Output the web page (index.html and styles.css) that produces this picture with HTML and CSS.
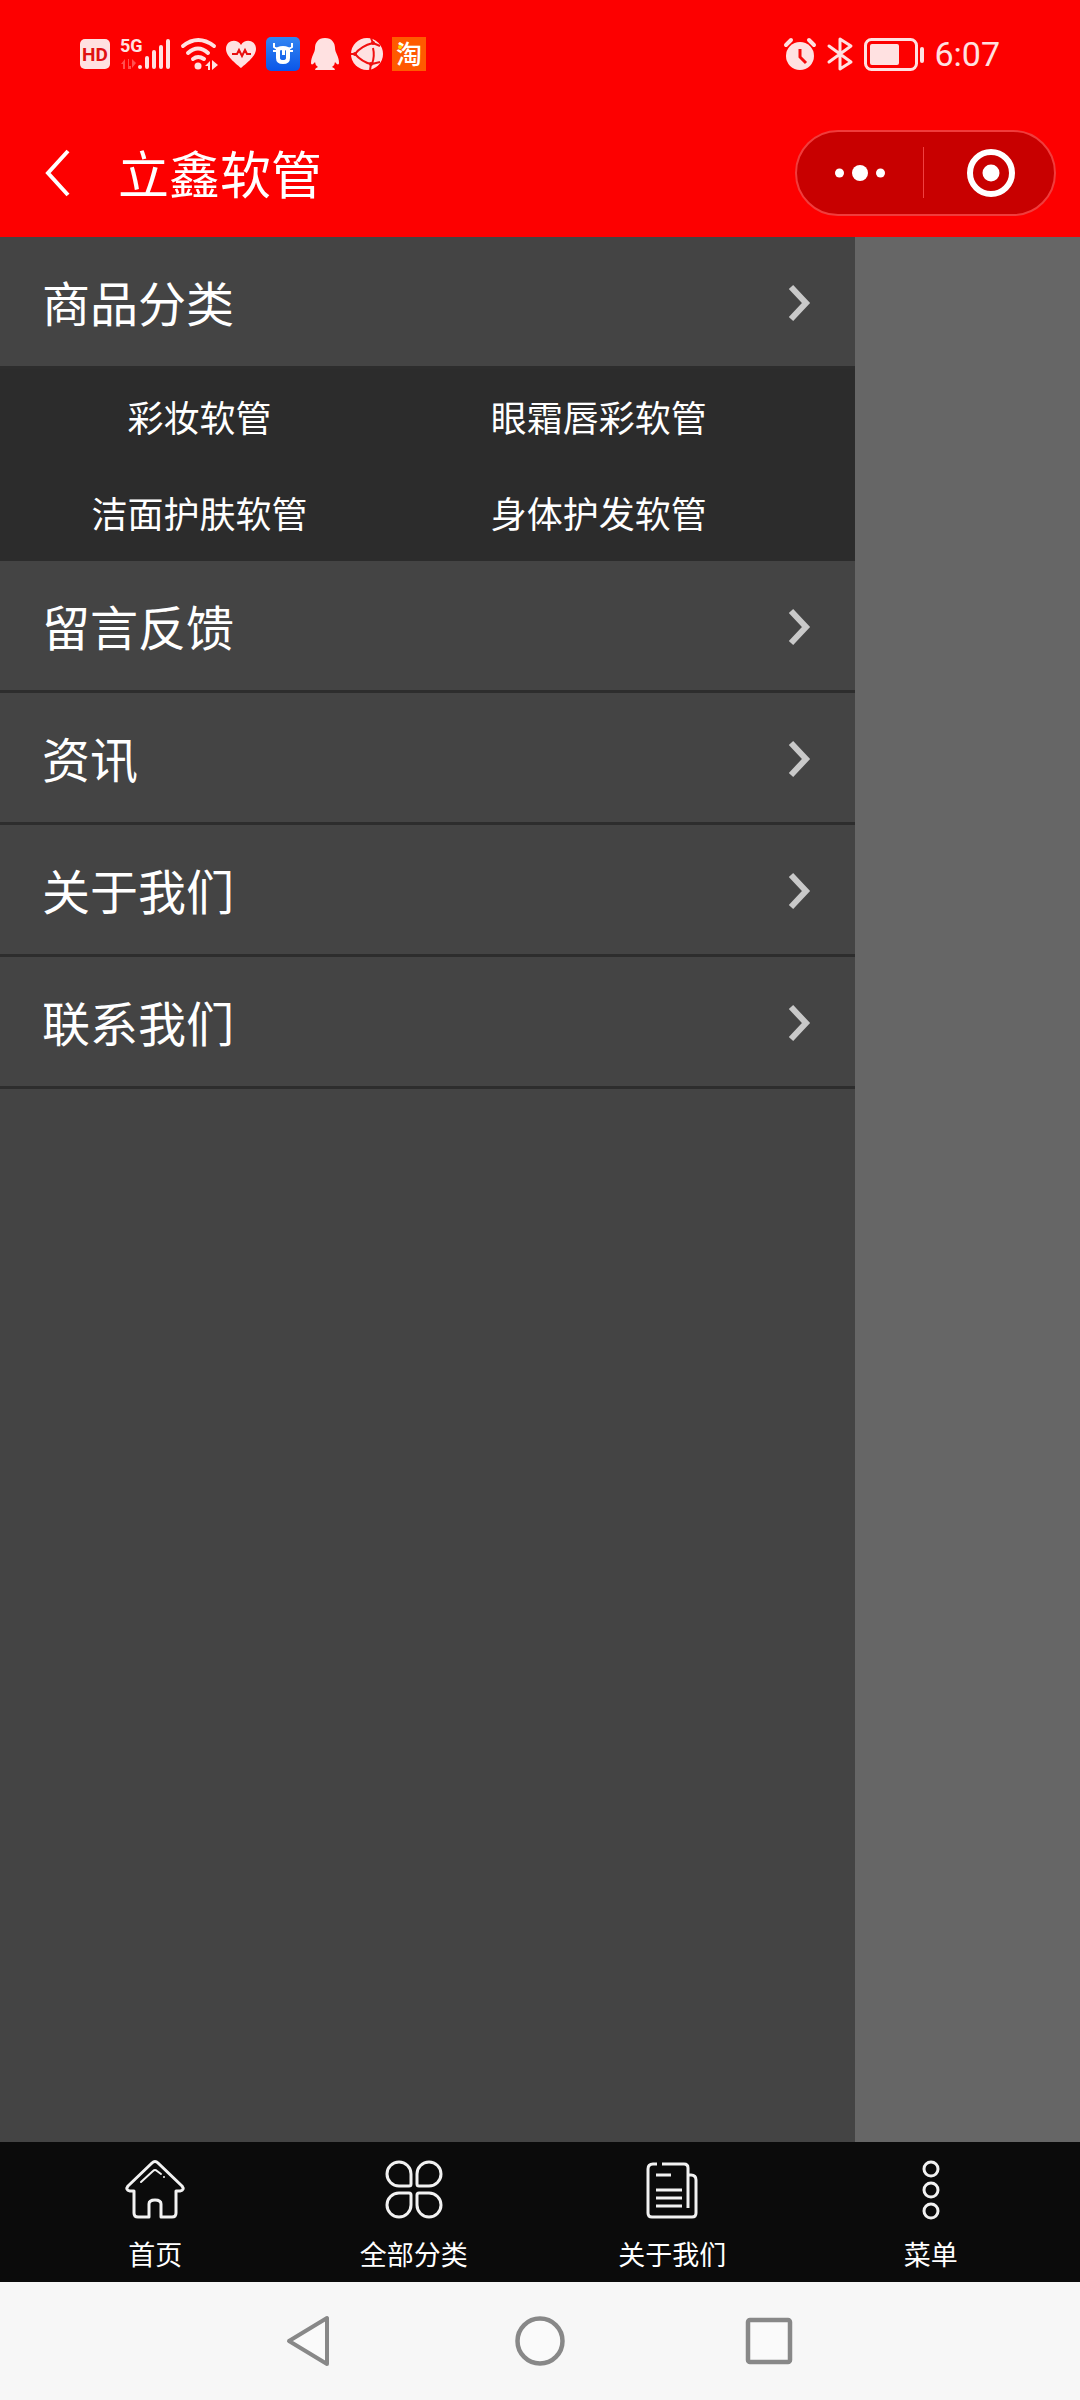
FILE: index.html
```html
<!DOCTYPE html>
<html lang="zh-CN">
<head>
<meta charset="utf-8">
<meta name="viewport" content="width=device-width, initial-scale=1">
<title>立鑫软管</title>
<link rel="stylesheet" href="styles.css">
</head>
<body>
<div class="screen">
  <header class="header">
    <div class="status">
      <div class="status-group">
        <svg class="ico" width="30" height="34" viewBox="0 0 30 34">
          <rect x="0" y="2" width="30" height="30" rx="5" fill="#ffe1e1"/>
          <text class="hd" x="15" y="24" text-anchor="middle">HD</text>
        </svg>
        <svg class="ico" width="50" height="34" viewBox="0 0 50 34">
          <text class="net" x="0" y="15">5G</text>
          <g fill="#ff5050"><path d="M5 22v10H3v-5H1zM9 22v7h2v3H8V22zM12 22l4 4-4 5z"/></g>
          <g stroke="#ffe1e1" stroke-width="4" stroke-linecap="round">
            <path d="M20 30v0M27 21v9M34 15v15M41 10v20M48 4v26"/>
          </g>
        </svg>
        <svg class="ico" width="36" height="34" viewBox="0 0 36 34">
          <g fill="none" stroke="#ffe1e1" stroke-width="4" stroke-linecap="round">
            <path d="M3 9Q18-3 34 9M8 16Q18 7 28 16M13 22Q18 18 24 22"/>
          </g>
          <circle cx="18" cy="29" r="3.500" fill="#ffe1e1"/>
          <path d="M30 24v9h-2v-4h-3zM32 23l6 5-6 5z" fill="#ffe1e1"/>
        </svg>
        <svg class="ico" width="30" height="34" viewBox="0 0 30 34">
          <path d="M15 31C12 28 0 20 0 12C0 3 11 1 15 8C19 1 30 3 30 12C30 20 18 28 15 31Z" fill="#ffe1e1"/>
          <path d="M6 17h5l2-4 3 6 3-6 2 4h4" fill="none" stroke="#e80d0d" stroke-width="2"/>
        </svg>
        <svg class="ico" width="34" height="34" viewBox="0 0 34 34">
          <defs><linearGradient id="appBlue" x1="0" y1="0" x2="0" y2="1"><stop offset="0" stop-color="#3386f2"/><stop offset="1" stop-color="#0b56e8"/></linearGradient></defs>
          <rect width="34" height="34" rx="5" fill="url(#appBlue)"/>
          <path d="M12 12Q17 10 22 12V21Q22 25 17 25T12 21Z" fill="none" stroke="#fff" stroke-width="4"/>
          <path d="M11 12L8 10V6M23 12l3-2V6M11 14H7M23 14h4" fill="none" stroke="#fff" stroke-width="2"/>
          <path d="M16 13h3v5h-3z" fill="#fff"/>
        </svg>
        <svg class="ico" width="30" height="34" viewBox="0 0 30 34">
          <path d="M15 1C8 1 5 6 5 11C5 16 1 19 1 26C1 28 3 28 5 25Q5 28 8 30Q5 31 5 33H25Q25 31 22 30Q25 28 25 25C27 28 29 28 29 26C29 19 25 16 25 11C25 6 22 1 15 1Z" fill="#ffe1e1"/>
        </svg>
        <svg class="ico" width="32" height="34" viewBox="0 0 32 34">
          <circle cx="17" cy="17" r="16" fill="#ffe1e1"/>
          <path d="M21 1L23 6Q11 9 5 17Q12 25 21 27L20 33M1 17H5M23 6L30 9M23 11Q25 19 22 27M22 27L30 25" fill="none" stroke="#f00f0f" stroke-width="2"/>
          <g fill="#f00f0f"><circle cx="23" cy="6" r="2"/><circle cx="5" cy="17" r="2"/><circle cx="21" cy="27" r="2"/></g>
        </svg>
        <svg class="ico" width="34" height="34" viewBox="0 0 34 34">
          <rect width="34" height="34" fill="#ff5a00"/>
          <text class="tao" x="17" y="27" text-anchor="middle">淘</text>
          <circle cx="8" cy="10" r="2" fill="#ffd500"/>
        </svg>
      </div>
      <div class="status-group">
        <svg class="ico" width="32" height="34" viewBox="0 0 32 34">
          <circle cx="16" cy="19" r="14" fill="#ffe1e1"/>
          <path d="M2 8l5-5M25 3l5 5" stroke="#ffe1e1" stroke-width="4" stroke-linecap="round"/>
          <path d="M16 12v8l6 6" fill="none" stroke="#f40b0b" stroke-width="3"/>
        </svg>
        <svg class="ico" width="28" height="34" viewBox="0 0 28 34">
          <path d="M3 9L25 25L14 32V2L25 9L3 25" fill="none" stroke="#ffe1e1" stroke-width="3" stroke-linecap="round" stroke-linejoin="round"/>
        </svg>
        <svg class="ico" width="60" height="34" viewBox="0 0 60 34">
          <rect x="1.500" y="2.500" width="51" height="30" rx="6" fill="none" stroke="#ffe1e1" stroke-width="3"/>
          <rect x="6" y="7" width="29" height="21" rx="2" fill="#ffe1e1"/>
          <rect x="56" y="10" width="4" height="16" rx="2" fill="#ffe1e1"/>
        </svg>
        <time class="clock">6:07</time>
      </div>
    </div>
    <div class="titlebar">
      <button class="back" aria-label="返回">
        <svg class="ico" width="26" height="46" viewBox="0 0 26 46"><path d="M23 1L3 23L23 45" fill="none" stroke="#fff" stroke-width="4"/></svg>
      </button>
      <h1 class="title">立鑫软管</h1>
      <div class="capsule">
        <button class="capsule-btn" aria-label="更多">
          <svg class="ico" width="50" height="16" viewBox="0 0 50 16" fill="#fff"><circle cx="4.500" cy="8" r="4.500"/><circle cx="25" cy="8" r="8"/><circle cx="45.500" cy="8" r="4.500"/></svg>
        </button>
        <span class="capsule-line"></span>
        <button class="capsule-btn capsule-close" aria-label="关闭">
          <svg class="ico" width="48" height="48" viewBox="0 0 48 48"><circle cx="24" cy="24" r="21" fill="none" stroke="#fff" stroke-width="6"/><circle cx="24" cy="24" r="8.500" fill="#fff"/></svg>
        </button>
      </div>
    </div>
  </header>

  <main class="backdrop">
    <nav class="drawer">
      <a class="row" href="#category">商品分类<svg class="ico" width="22" height="36" viewBox="0 0 22 36"><path d="M2 3L17 19L2 35" fill="none" stroke="#c9c9c9" stroke-width="6"/></svg></a>
      <div class="sub">
        <a class="sub-item" href="#s1">彩妆软管</a>
        <a class="sub-item" href="#s2">眼霜唇彩软管</a>
        <a class="sub-item" href="#s3">洁面护肤软管</a>
        <a class="sub-item" href="#s4">身体护发软管</a>
      </div>
      <a class="row" href="#feedback">留言反馈<svg class="ico" width="22" height="36" viewBox="0 0 22 36"><path d="M2 3L17 19L2 35" fill="none" stroke="#c9c9c9" stroke-width="6"/></svg></a>
      <a class="row" href="#news">资讯<svg class="ico" width="22" height="36" viewBox="0 0 22 36"><path d="M2 3L17 19L2 35" fill="none" stroke="#c9c9c9" stroke-width="6"/></svg></a>
      <a class="row" href="#about">关于我们<svg class="ico" width="22" height="36" viewBox="0 0 22 36"><path d="M2 3L17 19L2 35" fill="none" stroke="#c9c9c9" stroke-width="6"/></svg></a>
      <a class="row" href="#contact">联系我们<svg class="ico" width="22" height="36" viewBox="0 0 22 36"><path d="M2 3L17 19L2 35" fill="none" stroke="#c9c9c9" stroke-width="6"/></svg></a>
    </nav>
  </main>

  <nav class="tabs">
    <a class="tab" href="#home">
      <svg class="ico" width="60" height="60" viewBox="0 0 60 60" fill="none" stroke="#f2f2f2" stroke-width="3" stroke-linejoin="round" stroke-linecap="round">
        <path d="M9 32H5Q0 31 3 27L27 4Q30 1 33 4L57 27Q60 31 55 32H51V54Q51 58 47 58H36V45Q36 41 30 41T24 45V58H13Q9 58 9 54Z"/>
        <path d="M16 23L28 12Q30 10 32 12L36 15M39 18v0" stroke-width="2"/>
      </svg>
      <span>首页</span>
    </a>
    <a class="tab" href="#all">
      <svg class="ico" width="60" height="60" viewBox="0 0 60 60" fill="none" stroke="#f2f2f2" stroke-width="3">
        <path id="leaf" d="M27 25Q27 27 25 27H15A12 12 0 1 1 27 15Z"/>
        <path d="M33 25Q33 27 35 27H45A12 12 0 1 0 33 15Z"/>
        <path d="M27 36Q27 34 25 34H15A12 12 0 1 0 27 46Z"/>
        <path d="M33 36Q33 34 35 34H45A12 12 0 1 1 33 46Z"/>
      </svg>
      <span>全部分类</span>
    </a>
    <a class="tab" href="#us">
      <svg class="ico" width="60" height="60" viewBox="0 0 60 60" fill="none" stroke="#f2f2f2" stroke-width="3">
        <path d="M15 5H11Q6 5 6 10V54Q6 58 10 58H50Q54 58 54 54V21Q54 16 49 16H46V49M20 5H42Q46 5 46 9V16M14 16H29M14 31H40M14 39H40M14 47H40"/>
      </svg>
      <span>关于我们</span>
    </a>
    <a class="tab" href="#menu">
      <svg class="ico" width="60" height="60" viewBox="0 0 60 60" fill="none" stroke="#f2f2f2" stroke-width="3">
        <circle cx="30" cy="10" r="7"/><circle cx="30" cy="31" r="7"/><circle cx="30" cy="52" r="7"/>
      </svg>
      <span>菜单</span>
    </a>
  </nav>

  <div class="sysnav">
    <button class="sys" aria-label="后退"><svg class="ico" width="50" height="50" viewBox="0 0 50 50"><path d="M4 25L42 2V48Z" fill="#fafafa" stroke="#888" stroke-width="4" stroke-linejoin="round"/></svg></button>
    <button class="sys" aria-label="主屏幕"><svg class="ico" width="50" height="50" viewBox="0 0 50 50"><circle cx="25" cy="25" r="22.500" fill="#fafafa" stroke="#888" stroke-width="4.500"/></svg></button>
    <button class="sys" aria-label="最近任务"><svg class="ico" width="50" height="50" viewBox="0 0 50 50"><rect x="3" y="4" width="42" height="42" rx="2" fill="#fafafa" stroke="#888" stroke-width="4.500"/></svg></button>
  </div>
</div>
</body>
</html>
```
FILE: styles.css
```css
* { box-sizing: border-box; }
body {
  margin: 0;
  font-family: "Noto Sans CJK SC", "Noto Sans", sans-serif;
  color: #fff;
}
a { color: inherit; text-decoration: none; }
button {
  border: 0;
  padding: 0;
  background: none;
  display: flex;
  align-items: center;
  justify-content: center;
}
.ico { display: block; flex: none; overflow: visible; }

.screen { display: flex; flex-direction: column; min-height: 100vh; }

.header { background: #fd0000; }
.status {
  display: flex;
  justify-content: space-between;
  align-items: center;
  height: 108px;
  padding: 0 80px;
}
.status-group { display: flex; align-items: center; gap: 10px; }
.clock {
  font: 400 34px/34px Roboto, sans-serif;
  color: #ffe1e1;
}
.hd { font: 700 19px Roboto, sans-serif; fill: #e01212; }
.net { font: 700 18px Roboto, sans-serif; fill: #ffe1e1; }
.tao { font: 500 26px "Noto Sans CJK SC", sans-serif; fill: #fff; }

.titlebar {
  display: flex;
  align-items: center;
  height: 129px;
  padding: 0 24px 0 45px;
}
.title {
  flex: 1;
  margin: 0 0 2px 47px;
  font-size: 51px;
  line-height: 60px;
  font-weight: 400;
}
.capsule {
  display: flex;
  align-items: center;
  width: 261px;
  height: 86px;
  border: 2px solid #f03c3c;
  border-radius: 43px;
  background: #c80000;
}
.capsule-btn { flex: 1; height: 100%; }
.capsule-close { padding-left: 5px; }
.capsule-line { width: 1px; height: 51px; background: #f04040; }

.backdrop { flex: 1; display: flex; background: #666; }
.drawer { width: 79.2%; background: #444; }
.row {
  display: flex;
  align-items: center;
  justify-content: space-between;
  height: 132px;
  padding: 0 44px 2px 42px;
  border-bottom: 3px solid #2d2d2d;
  font-size: 48px;
  line-height: 72px;
}
.row .ico { margin-top: 2px; }
.sub {
  display: grid;
  grid-template-columns: 1fr 1fr;
  padding-right: 57px;
  background: #2c2c2c;
}
.sub-item {
  height: 96px;
  line-height: 94px;
  font-size: 36px;
  text-align: center;
}

.tabs {
  display: flex;
  height: 140px;
  padding: 17px 20px 0 26px;
  background: #0b0b0b;
}
.tab {
  flex: 1;
  display: flex;
  flex-direction: column;
  align-items: center;
  gap: 15px;
  font-size: 27px;
  line-height: 40px;
}

.sysnav {
  display: flex;
  align-items: center;
  justify-content: center;
  gap: 180px;
  height: 118px;
  background: #f7f7f7;
}
```
